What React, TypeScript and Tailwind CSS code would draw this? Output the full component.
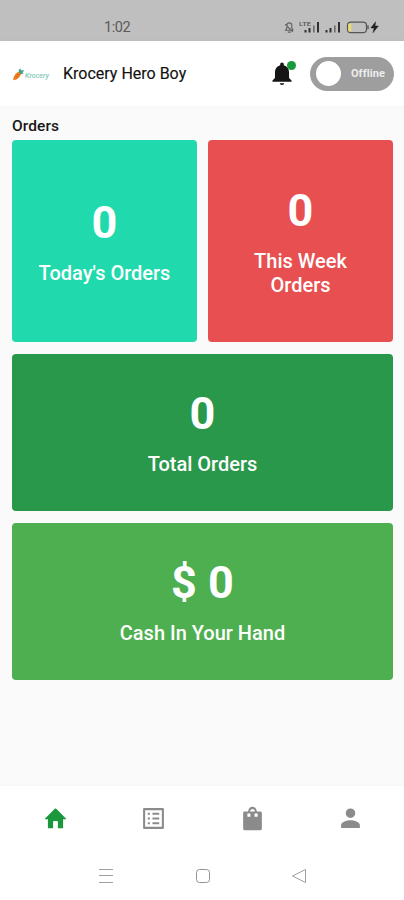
import type { ReactNode } from "react";

function StatusBar() {
  return (
    <div className="flex h-[41px] items-end bg-[#bfbfbf] pb-[5px] pl-[104px] pr-[24px] text-[#5a5a5a]">
      <span className="text-[14.5px] leading-[17px] tracking-[-0.4px]">1:02</span>
      <svg className="mb-[1px] ml-auto" width="97" height="15" viewBox="0 0 97 15" fill="none">
        <g stroke="#626262" strokeWidth="1.1" strokeLinecap="round">
          <path d="M2.300 10.200h7.500M3 9.500l.8-1.400V5.400a2.500 2.500 0 0 1 5 0v2.800l1.100 1.500M2.500 4.500l7 7M5.200 12.100h2.200" />
        </g>
        <text x="16" y="5.600" fontSize="6" fill="#555" fontWeight="500" textLength="12" lengthAdjust="spacingAndGlyphs">LTE</text>
        <g fill="#303030">
          <rect x="21.500" y="10" width="2" height="2.500" />
          <rect x="25.500" y="8" width="2" height="4.500" />
          <rect x="30" y="5.500" width="1.600" height="7" fill="#6d6d6d" />
          <rect x="34" y="2" width="2" height="10.500" />
          <rect x="42.500" y="10" width="2" height="2.500" />
          <rect x="46.500" y="8" width="2" height="4.500" />
          <rect x="51" y="5.500" width="1.600" height="7" fill="#6d6d6d" />
          <rect x="55" y="2" width="2" height="10.500" />
        </g>
        <rect x="64.500" y="2.200" width="19" height="10.500" rx="3.500" stroke="#555" strokeWidth="1.200" />
        <rect x="65.300" y="3.500" width="3" height="8" rx="1.200" fill="#e8dc6b" />
        <path d="M85 5.200v4" stroke="#555" strokeWidth="1.400" />
        <path d="M92.600 1.800 87.800 8h3.300L90 12.700 95.300 6H92z" fill="#222" stroke="#222" strokeWidth=".5" />
      </svg>
    </div>
  );
}

function Logo() {
  return (
    <svg className="translate-y-px" width="38" height="14" viewBox="0 0 38 14">
      <path d="M1.200 12.200C1.200 8.600 4 4.400 6.600 4c1.700-.1 2.800 1 2.300 2.500C8 9.300 4.400 12.200 1.200 12.200z" fill="#ee7d1c" />
      <path d="m3.600 8.200 1.700 1M5.200 6l1.700 1.200" stroke="#b9571c" strokeWidth=".7" />
      <path d="M7.200 4.400C6 2.500 7.300.8 8.700.8c.3.700.2 1.300.1 1.900 1.200-1 2.800-.7 3.300.4-.8.600-1.500.9-2.200.9.900.3 1.500 1 1.400 1.800-1.500.4-3.100 0-4.100-1.400z" fill="#3aa28b" />
      <text x="13" y="10.300" fontSize="6.300" fontStyle="italic" fontWeight="500" fill="#7fcab8" textLength="24" lengthAdjust="spacingAndGlyphs">Krocery</text>
    </svg>
  );
}

function AppBar() {
  return (
    <header className="flex h-[65px] items-center bg-white pl-[12px] pr-[10px] shadow-[0_0_5px_rgba(0,0,0,0.03)]">
      <Logo />
      <h1 className="ml-[13px] text-[16px] font-normal leading-[20px] text-[#111] [-webkit-text-stroke:0.150px_#111]">Krocery Hero Boy</h1>
      <div className="relative ml-auto mr-[14px] size-[26px]">
        <svg className="-translate-x-px -translate-y-px" width="26" height="28" viewBox="0 0 24 25.850" fill="#151515">
          <path d="M12 23c1.100 0 2-.7 2-1.600h-4c0 .9.900 1.600 2 1.600zm6.500-6.300v-5.500c0-3.200-1.800-5.700-4.800-6.400v-.7C13.700 3 13 2.300 12 2.300s-1.700.7-1.700 1.800v.7c-3 .7-4.800 3.200-4.800 6.400v5.500l-2.300 2.200v1.100h17.600v-1.100z" />
        </svg>
        <span className="absolute left-[17px] top-0 size-[9px] rounded-full bg-[#169a3a]" />
      </div>
      <div className="flex h-[34px] w-[84px] items-center rounded-full bg-[#9e9e9e] pl-[6px] pr-[9px]">
        <span className="size-[25px] rounded-full bg-white" />
        <span className="ml-auto pt-px text-[11px] font-bold tracking-[0.1px] text-[#ededed]">Offline</span>
      </div>
    </header>
  );
}

function Card({ value, label, className }: { value: string; label: string; className: string }) {
  return (
    <div className={`flex flex-col items-center justify-center rounded-[4px] text-center text-white ${className}`}>
      <div className="text-[45px] font-bold leading-[52px]">{value}</div>
      <div className="mt-[12px] max-w-[140px] text-[20px] font-medium leading-[24px]">{label}</div>
    </div>
  );
}

function NavIcon({ children, color }: { children: ReactNode; color: string }) {
  return (
    <div className="flex w-[98px] justify-center">
      <svg width="25" height="25" viewBox="0 0 24 24" fill={color}>{children}</svg>
    </div>
  );
}

export default function App() {
  return (
    <div className="flex h-[900px] w-[404px] flex-col overflow-hidden bg-[#fafafa] font-[Roboto,sans-serif]">
      <StatusBar />
      <AppBar />
      <main className="flex-1 pl-[12px] pr-[11px] pt-[9px]">
        <h2 className="h-[25px] pt-px text-[15.500px] font-medium leading-[20px] tracking-[0.1px] text-[#171717]">Orders</h2>
        <div className="flex gap-[11px]">
          <Card value="0" label="Today's Orders" className="h-[202px] w-[185px] bg-[#20d9ac]" />
          <Card value="0" label="This Week Orders" className="h-[202px] w-[185px] bg-[#e84f50]" />
        </div>
        <div className="mt-[11.500px] flex flex-col gap-[12px]">
          <Card value="0" label="Total Orders" className="h-[157px] bg-[#2a984a]" />
          <Card value="$ 0" label="Cash In Your Hand" className="h-[157px] bg-[#4daf50] [&>div]:max-w-none" />
        </div>
      </main>
      <footer className="h-[114px] bg-white shadow-[0_0_4px_rgba(0,0,0,0.04)]">
        <nav className="flex justify-center gap-[0.400px] pl-[2px] pt-[20px]">
          <NavIcon color="#1c983c">
            <path d="M9.700 21.300v-6.100c0-.5.300-.8.800-.8h3c.5 0 .8.300.8.800v6.100h5V12.700h2.400c.5 0 .6-.4.300-.8L12.700 2.600c-.4-.4-1-.4-1.400 0L2 11.900c-.3.400-.2.800.3.800h2.400v8.600z" />
          </NavIcon>
          <NavIcon color="#8b8b8b">
            <path d="M20.800 2H3.200C2.500 2 2 2.500 2 3.200v17.600c0 .7.500 1.200 1.200 1.200h17.600c.7 0 1.200-.5 1.200-1.200V3.200c0-.7-.5-1.200-1.200-1.200zM20 20H4V4h16zM11 6.500h6.500v2H11zm0 4.500h6.500v2H11zm0 4.500h6.500v2H11zm-4.500-9h2v2h-2zm0 4.500h2v2h-2zm0 4.500h2v2h-2z" />
          </NavIcon>
          <NavIcon color="#8b8b8b">
            <path fillRule="evenodd" d="M19.500 5.200h-3.300C16 2.600 14.300.7 12 .7S8 2.600 7.800 5.200H4.500C3.600 5.200 3 5.800 3 6.700v15c0 .9.600 1.500 1.500 1.500h15c.9 0 1.500-.6 1.500-1.500v-15c0-.9-.6-1.500-1.500-1.500zM12 2.800c1.200 0 2.200 1 2.400 2.400H9.600C9.800 3.800 10.800 2.800 12 2.800zM7.100 7.300h2.900v3H7.100zm6.900 0h2.900v3H14z" />
          </NavIcon>
          <NavIcon color="#8b8b8b">
            <path d="M12 11.500a4.600 4.600 0 1 0 0-9.200 4.600 4.600 0 0 0 0 9.200zm0 2.200c-3.500 0-9 1.600-9 4.700v2.800h18v-2.800c0-3.100-5.500-4.700-9-4.700z" />
          </NavIcon>
        </nav>
        <div className="mt-[37px] flex items-center justify-between pl-[98px] pr-[97px]">
          <svg width="16" height="16" viewBox="0 0 16 16" stroke="#a0a0a0">
            <path d="M1 1.500h14M1 7.500h14M1 14.500h14" />
          </svg>
          <svg width="16" height="16" viewBox="0 0 16 16" fill="none" stroke="#929292">
            <rect x="1.500" y="1.500" width="13" height="13" rx="3" />
          </svg>
          <svg width="16" height="16" viewBox="0 0 16 16" fill="none" stroke="#a0a0a0">
            <path d="M14.500 1.500 1.500 8l13 6.500z" strokeLinejoin="round" />
          </svg>
        </div>
      </footer>
    </div>
  );
}
